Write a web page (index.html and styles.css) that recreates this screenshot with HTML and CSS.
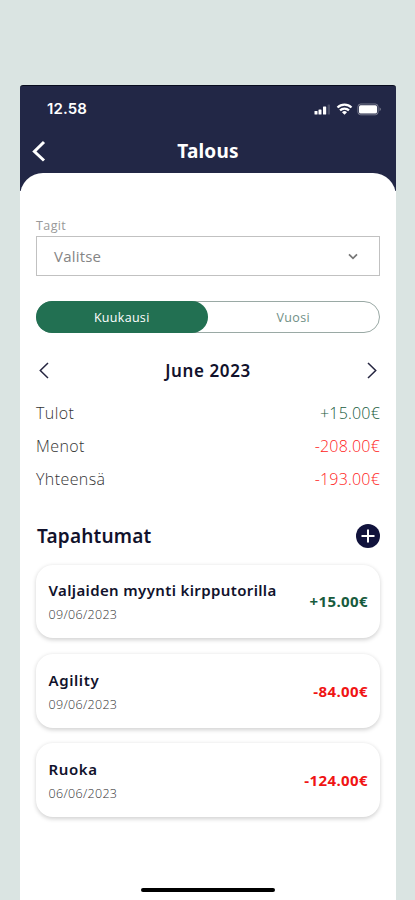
FILE: index.html
```html
<!DOCTYPE html>
<html lang="fi">
<head>
<meta charset="utf-8">
<title>Talous</title>
<link rel="stylesheet" href="styles.css">
</head>
<body>
<div class="phone">
  <header class="top">
    <div class="status">
      <span class="time">12.58</span>
      <svg class="signals" width="68" height="14" viewBox="0 0 68 14">
        <g fill="#fff">
          <rect x="0.5" y="9" width="3" height="3.5" rx=".6"/>
          <rect x="4.5" y="7.4" width="3" height="5.1" rx=".6"/>
          <rect x="9" y="4.5" width="3.2" height="8" rx=".6"/>
          <rect x="13.6" y="2.5" width="2.4" height="10" rx=".6" opacity=".18"/>
          <path d="M30.5 12.8l-2.5-2.6a3.5 3.5 0 0 1 5 0z"/>
          <rect x="45" y="3.2" width="18" height="8.4" rx="1.5"/>
        </g>
        <g fill="none" stroke="#fff" stroke-width="2.2">
          <path d="M23.5 5.5a10 10 0 0 1 14 0"/>
          <path d="M26 8.4a6.4 6.4 0 0 1 9 0"/>
        </g>
        <rect x="43.9" y="2" width="20.2" height="10.8" rx="2.8" fill="none" stroke="#fff" stroke-opacity=".38"/>
        <path d="M65.6 5.3q2.4 2 0 4z" fill="#fff" opacity=".45"/>
      </svg>
    </div>
    <div class="nav">
      <svg class="back" width="16" height="24" viewBox="0 0 16 24"><path d="M14 3L4.4 12.5l9.6 9" fill="none" stroke="#fff" stroke-width="3"/></svg>
      <h1>Talous</h1>
    </div>
  </header>
  <main class="sheet">
    <label class="label">Tagit</label>
    <div class="select">
      <span>Valitse</span>
      <svg width="12" height="8" viewBox="0 0 12 8"><path d="M2 2.3l4 4 4-4" fill="none" stroke="#777" stroke-width="1.7"/></svg>
    </div>
    <div class="toggle">
      <span class="option active">Kuukausi</span>
      <span class="option">Vuosi</span>
    </div>
    <div class="month">
      <svg width="16" height="18" viewBox="0 0 16 18"><path d="M12 1L4.3 8.5 12 16" fill="none" stroke="#252540" stroke-width="1.5"/></svg>
      <h2>June 2023</h2>
      <svg width="16" height="18" viewBox="0 0 16 18"><path d="M4 1l7.7 7.5L4 16" fill="none" stroke="#252540" stroke-width="1.5"/></svg>
    </div>
    <dl class="totals">
      <div><dt>Tulot</dt><dd class="plus">+15.00€</dd></div>
      <div><dt>Menot</dt><dd>-208.00€</dd></div>
      <div><dt>Yhteensä</dt><dd>-193.00€</dd></div>
    </dl>
    <div class="events-head">
      <h2>Tapahtumat</h2>
      <svg width="24" height="24" viewBox="0 0 24 24"><circle cx="12" cy="12" r="12" fill="#11133c"/><path d="M12 5.5v13M5.5 12h13" stroke="#fff" stroke-width="2"/></svg>
    </div>
    <div class="cards">
      <article class="card"><div><h3>Valjaiden myynti kirpputorilla</h3><p>09/06/2023</p></div><b class="plus">+15.00€</b></article>
      <article class="card"><div><h3 class="short">Agility</h3><p>09/06/2023</p></div><b>-84.00€</b></article>
      <article class="card"><div><h3 class="short">Ruoka</h3><p>06/06/2023</p></div><b>-124.00€</b></article>
    </div>
    <div class="home"></div>
  </main>
</div>
</body>
</html>
```
FILE: styles.css
```css
* { box-sizing: border-box; margin: 0; padding: 0; }
html, body { height: 900px; overflow: hidden; }
body { background: #dae4e2; font-family: "Open Sans", sans-serif; padding: 85px 19px 0 20px; }
svg { display: block; flex: none; }
h1, h2, h3 { font-family: "Noto Sans", sans-serif; font-weight: 600; color: #11122c; white-space: nowrap; }
.phone { height: 815px; border-top: 1.5px solid #070b1d; border-radius: 3px 3px 0 0; display: flex; flex-direction: column; background: linear-gradient(#222746 105px, #fff 105px); }
.top { height: 86.5px; flex: none; }
.status { height: 43px; display: flex; align-items: center; justify-content: space-between; padding: 2px 14px 0 27px; }
.time { font: 600 15px/20px Inter, sans-serif; color: #fff; letter-spacing: .1px; }
.nav { height: 43px; display: flex; align-items: center; padding-left: 10px; }
.nav h1 { flex: 1; text-align: center; padding: 0 26px 0 0; font-size: 19px; font-weight: 700; color: #fff; letter-spacing: .2px; }
.sheet { flex: 1; background: #fff; border-radius: 23px 23px 0 0; padding: 44px 16px 0; display: flex; flex-direction: column; }
.label { font-size: 12.5px; line-height: 18px; color: #999; height: 19px; letter-spacing: .4px; }
.select { height: 40px; flex: none; border: 1px solid #c1c1c1; display: flex; align-items: center; justify-content: space-between; padding: 0 20px 0 17px; font-size: 15px; color: #858585; letter-spacing: .2px; }
.toggle { height: 32px; flex: none; margin-top: 25px; border: 1px solid #9aa9a5; border-radius: 16px; display: flex; }
.option { flex: 1; display: flex; align-items: center; justify-content: center; padding-top: 1px; font-size: 12.5px; letter-spacing: .3px; color: #6f8f85; }
.option.active { background: #227052; color: #fff; border-radius: 16px; margin: -1px 0 -1px -1px; }
.month { height: 36px; flex: none; margin-top: 20px; display: flex; align-items: center; justify-content: space-between; }
.month h2 { font-size: 17px; letter-spacing: .6px; }
.totals { margin-top: 8px; }
.totals div { height: 33px; display: flex; align-items: center; justify-content: space-between; font-size: 16px; font-weight: 300; color: #333; }
.totals dt { letter-spacing: .4px; }
.totals dd { color: #f22; letter-spacing: .2px; }
.totals .plus { color: #175b3d; }
.events-head { height: 40px; flex: none; margin-top: 20px; display: flex; align-items: center; justify-content: space-between; }
.events-head h2 { font-size: 19px; letter-spacing: .2px; padding: 1px 0 0 1px; }
.cards { display: flex; flex-direction: column; gap: 15.5px; margin-top: 9px; }
.card { height: 73.8px; display: flex; align-items: center; justify-content: space-between; padding: 0 12.5px; border-radius: 17px; background: #fff; box-shadow: 0 1.5px 4px rgba(0,0,0,.18); }
.card h3 { font-size: 15px; line-height: 24px; letter-spacing: .37px; }
.card .short { letter-spacing: .6px; }
.card p { font-size: 12.5px; line-height: 18px; font-weight: 300; color: #333; margin-top: 4px; letter-spacing: .32px; }
.card b { font-size: 15px; font-weight: 700; color: #f01414; letter-spacing: .4px; margin-right: -.5px; }
.card .plus { color: #175b3d; }
.home { width: 134px; height: 4px; border-radius: 2px; background: #000; margin: auto auto 8px 105px; }
```
